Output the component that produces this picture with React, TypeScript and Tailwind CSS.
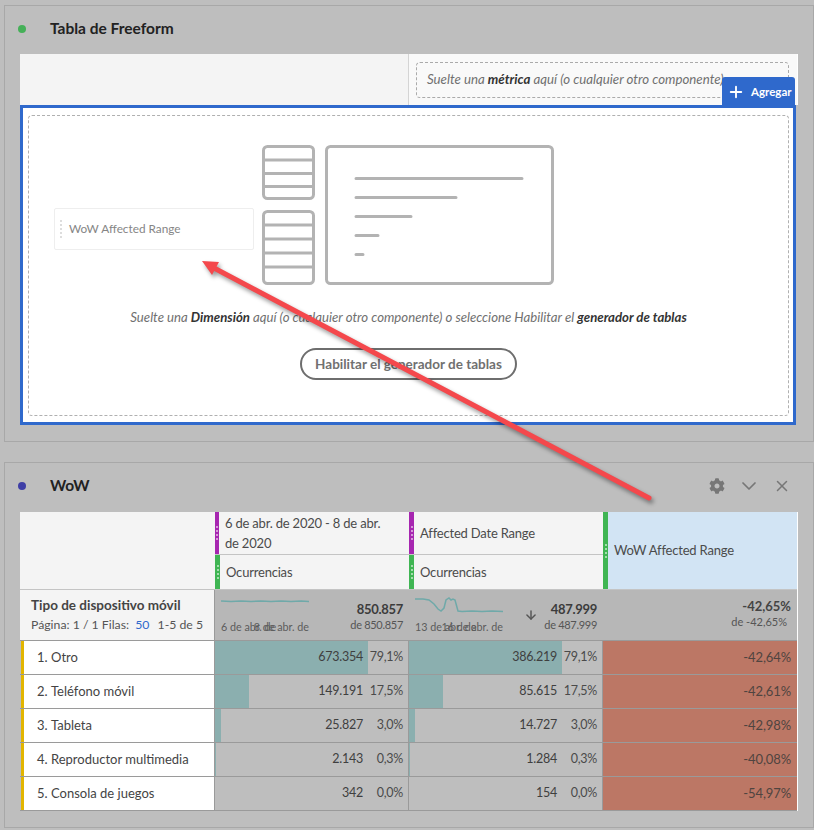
import { FaCog } from 'react-icons/fa';
import { LuChevronDown, LuX, LuPlus, LuArrowDown } from 'react-icons/lu';

const rows = [
  { n: '1.', label: 'Otro', a: '673.354', ap: '79,1%', aw: 153, b: '386.219', bp: '79,1%', bw: 153, d: '-42,64%' },
  { n: '2.', label: 'Teléfono móvil', a: '149.191', ap: '17,5%', aw: 34, b: '85.615', bp: '17,5%', bw: 34, d: '-42,61%' },
  { n: '3.', label: 'Tableta', a: '25.827', ap: '3,0%', aw: 6, b: '14.727', bp: '3,0%', bw: 6, d: '-42,98%' },
  { n: '4.', label: 'Reproductor multimedia', a: '2.143', ap: '0,3%', aw: 1, b: '1.284', bp: '0,3%', bw: 1, d: '-40,08%' },
  { n: '5.', label: 'Consola de juegos', a: '342', ap: '0,0%', aw: 0, b: '154', bp: '0,0%', bw: 0, d: '-54,97%' },
];

// Little dotted grip on the coloured column markers
const Grip = ({ color }: { color: string }) => (
  <div className={`w-[5px] self-stretch flex flex-col items-center justify-center gap-[2px] ${color}`}>
    <span className="w-[2px] h-[2px] rounded-full bg-white/70" />
    <span className="w-[2px] h-[2px] rounded-full bg-white/70" />
    <span className="w-[2px] h-[2px] rounded-full bg-white/70" />
    <span className="w-[2px] h-[2px] rounded-full bg-white/70" />
  </div>
);

const HeaderCell = ({ color, className, children }: { color: string; className: string; children: React.ReactNode }) => (
  <div className={`flex items-center bg-[#f4f4f4] ${className}`}>
    <Grip color={color} />
    <div className="pl-[6px] pr-[20px] text-[13px] tracking-[-0.2px] leading-[20px] text-[#4b4b4b]">{children}</div>
  </div>
);

const Spark = ({ d, left, right }: { d: string; left: string; right: string }) => (
  <div className="w-[88px] shrink-0">
    <svg width="88" height="24" viewBox="0 0 88 24" className="block">
      <path d={d} fill="none" stroke="#6fa9a9" strokeWidth="1.5" />
    </svg>
    <div className="relative h-[14px] mt-[3px] text-[10.75px] leading-[14px] text-[#5c5c5c] whitespace-nowrap">
      <span className="absolute left-0 top-0">{left}</span>
      <span className="absolute right-0 top-0">{right}</span>
    </div>
  </div>
);

const Total = ({ value, sub, className }: { value: string; sub: string; className?: string }) => (
  <div className={`text-right ${className ?? ''}`}>
    <div className="text-[13px] tracking-[-0.3px] leading-[18px] font-bold text-[#3c3c3c]">{value}</div>
    <div className="text-[11px] tracking-[-0.3px] leading-[14px] text-[#555]">{sub}</div>
  </div>
);

const MetricCell = ({ value, pct, width }: { value: string; pct: string; width: number }) => (
  <div className="relative flex items-center justify-end border-r border-[#9a9a9a] pr-[5px] text-[12.5px] tracking-[-0.25px] text-[#3f3f3f]">
    <div className="absolute left-0 top-0 bottom-0 bg-[#8bafaf]" style={{ width }} />
    <span className="relative">{value}</span>
    <span className="relative w-[40px] text-right text-[#4a4a4a]">{pct}</span>
  </div>
);

export default function App() {
  return (
    <div className="relative w-[814px] h-[830px] overflow-hidden bg-[#bebebe] pt-[5px] pl-[4px] font-['Lato','Noto_Sans',sans-serif]">
      {/* Empty freeform table */}
      <section className="w-[810px] h-[437px] border border-[#a8a8a8] pl-[15px]">
        <div className="h-[48px] pb-[2px] flex items-center">
          <span className="w-[8px] h-[8px] rounded-full bg-[#45b058] ml-[-2px]" />
          <h2 className="ml-[24px] text-[15.5px] font-bold text-[#222]">Tabla de Freeform</h2>
        </div>
        <div className="w-[778px]">
          <div className="relative h-[51px] flex border-r border-white">
            <div className="w-[389px] bg-[#f4f4f4] border-r border-[#d4d4d4]" />
            <div className="flex-1 bg-[#f9f9f9] pt-[8px] pl-[7px]">
              <div className="w-[373px] h-[36px] flex items-center border border-dashed border-[#aaa] rounded-[4px] pl-[10px] text-[13.25px] italic text-[#707070] whitespace-nowrap">
                <span>Suelte una <b className="text-[#333]">métrica</b> aquí (o cualquier otro componente)</span>
              </div>
            </div>
            <div className="absolute right-[2px] top-[23px] w-[73px] h-[29px] flex items-center gap-[6px] pl-[5px] bg-[#2f69cc] rounded-t-[3px] text-[11.5px] font-bold text-white">
              <LuPlus size={18} strokeWidth={2.5} />
              <span>Agregar</span>
            </div>
          </div>
          <div className="w-[776px] h-[320px] border-[3px] border-[#2f69cc] bg-white pt-[7px] pl-[5px]">
            <div className="relative w-[761px] h-[301px] border border-dashed border-[#b0b0b0] rounded-[4px] flex flex-col items-center">
              <div className="absolute left-[25px] top-[92px] w-[200px] h-[42px] flex items-center gap-[6px] pl-[5px] border border-[#eeeeee] rounded-[2px] text-[11.8px] text-[#858585]">
                <span className="w-[2px] h-[18px] border-l-2 border-dotted border-[#ddd]" />
                <span className="ml-[1px]">WoW Affected Range</span>
              </div>
              <svg width="292" height="141" viewBox="0 0 292 141" fill="none" stroke="#b3b3b3" strokeWidth="3" className="mt-[29px] ml-[-1px]">
                <rect x="1.5" y="1.5" width="50" height="52" rx="4" />
                <path d="M2 15h50M2 28.500h50M2 41.500h50" />
                <rect x="1.5" y="66.500" width="50" height="72" rx="4" />
                <path d="M2 80h50M2 94h50M2 108h50M2 122h50" />
                <rect x="64.500" y="1.500" width="226" height="137" rx="4" />
                <path strokeLinecap="round" d="M94 33.500h166M94 52.500h100M94 71.500h55M94 90.500h22M94 109.500h7" />
              </svg>
              <p className="mt-[21px] text-[13.2px] leading-[20px] italic text-[#707070] whitespace-nowrap">
                Suelte una <b className="text-[#333]">Dimensión</b> aquí (o cualquier otro componente) o seleccione Habilitar el <b className="text-[#333]">generador de tablas</b>
              </p>
              <button className="mt-[21px] w-[217px] h-[32px] rounded-full border-2 border-[#6e6e6e] text-[13.5px] font-bold text-[#707070]">
                Habilitar el generador de tablas
              </button>
            </div>
          </div>
        </div>
      </section>

      {/* WoW table */}
      <section className="mt-[20px] w-[810px] h-[366px] border border-[#a8a8a8] pl-[15px]">
        <div className="h-[49px] pb-[3px] flex items-center">
          <span className="w-[8px] h-[8px] rounded-full bg-[#3f3fa6] ml-[-2px]" />
          <h2 className="ml-[24px] text-[15.5px] font-bold text-[#222]">WoW</h2>
          <div className="ml-auto mr-[22px] flex items-center gap-[12px] text-[#777]">
            <FaCog size={16} />
            <LuChevronDown size={24} strokeWidth={1.75} />
            <LuX size={18} />
          </div>
        </div>

        <div className="w-[778px] border-r border-white">
          {/* column headers */}
          <div className="grid grid-cols-[195px_194px_194px_194px] h-[77px]">
            <div className="bg-[#f4f4f4]" />
            <div className="flex flex-col">
              <HeaderCell color="bg-[#a626b0]" className="h-[43px] border-b border-[#c4c4c4]">6 de abr. de 2020 - 8 de abr. de 2020</HeaderCell>
              <HeaderCell color="bg-[#3fb553]" className="h-[34px]">Ocurrencias</HeaderCell>
            </div>
            <div className="flex flex-col">
              <HeaderCell color="bg-[#a626b0]" className="h-[43px] border-b border-[#c4c4c4]">Affected Date Range</HeaderCell>
              <HeaderCell color="bg-[#3fb553]" className="h-[34px]">Ocurrencias</HeaderCell>
            </div>
            <div className="flex items-center bg-[#d2e4f4]">
              <Grip color="bg-[#3fb553]" />
              <span className="pl-[6px] text-[13px] tracking-[-0.2px] text-[#4b4b4b]">WoW Affected Range</span>
            </div>
          </div>

          {/* summary row */}
          <div className="grid grid-cols-[195px_194px_194px_194px] h-[52px] border-b border-[#9a9a9a] border-t border-t-[#c4c4c4]">
            <div className="bg-[#f4f4f4] pl-[11px] pt-[5px] border-r border-[#9a9a9a]">
              <div className="text-[13.5px] leading-[20px] font-bold text-[#444]">Tipo de dispositivo móvil</div>
              <div className="text-[12.25px] leading-[20px] text-[#555] whitespace-nowrap">
                Página: 1 / 1 Filas: <span className="ml-[3px] mr-[5px] text-[#2f69cc]">50</span> 1-5 de 5
              </div>
            </div>
            <div className="bg-[#b7b7b7] flex pl-[6px] pr-[6px] pt-[3px] justify-between">
              <Spark d="M0 8l10 .5 10-.5 10 .5 10-.5 10 .5 10-.5 10 .5 10-.5 8 .5" left="6 de abr. de" right="8 de abr. de" />
              <Total value="850.857" sub="de 850.857" className="pt-[7px]" />
            </div>
            <div className="bg-[#b7b7b7] flex pl-[6px] pr-[6px] pt-[3px] justify-between">
              <Spark d="M0 6h8l6 1 5 4 4 5 3 2 3-3 2-8 3-2 2 2 2-1 2 1 3 11 4 .5 10-.5 10 .5 10-.5 11 .5" left="13 de abr. de" right="16 de abr. de" />
              <LuArrowDown size={14} strokeWidth={2.5} className="mt-[15px] ml-[14px] text-[#555]" />
              <Total value="487.999" sub="de 487.999" className="pt-[7px]" />
            </div>
            <div className="bg-[#b7b7b7] pr-[6px] pt-[7px] text-right">
              <div className="text-[13px] leading-[18px] font-bold text-[#444]">-42,65%</div>
              <div className="pr-[4px] text-[11px] leading-[14px] text-[#555]">de -42,65%</div>
            </div>
          </div>

          {/* data rows */}
          {rows.map((r) => (
            <div key={r.n} className="grid grid-cols-[195px_194px_194px_194px] h-[34px] border-b border-[#9a9a9a]">
              <div className="ml-[1px] flex items-center bg-white border-r border-[#9a9a9a] border-l-[3px] border-l-[#e2b500] pl-[13px] text-[13px] text-[#444] whitespace-nowrap">
                <span className="w-[14px]">{r.n}</span>
                <span>{r.label}</span>
              </div>
              <MetricCell value={r.a} pct={r.ap} width={r.aw} />
              <MetricCell value={r.b} pct={r.bp} width={r.bw} />
              <div className="flex items-center justify-end bg-[#bc7765] pr-[6px] text-[13px] tracking-[-0.1px] text-[#4f4440]">{r.d}</div>
            </div>
          ))}
        </div>
      </section>

      {/* Annotation arrow lying over both panels */}
      <svg width="814" height="830" viewBox="0 0 814 830" className="absolute left-0 top-0 pointer-events-none drop-shadow-[2px_3px_2px_rgba(0,0,0,0.4)]">
        <path d="M649 498L214 268" stroke="#f4484c" strokeWidth="5" strokeLinecap="round" />
        <path d="M202 261l17 1-7 13z" fill="#f4484c" />
      </svg>
    </div>
  );
}
